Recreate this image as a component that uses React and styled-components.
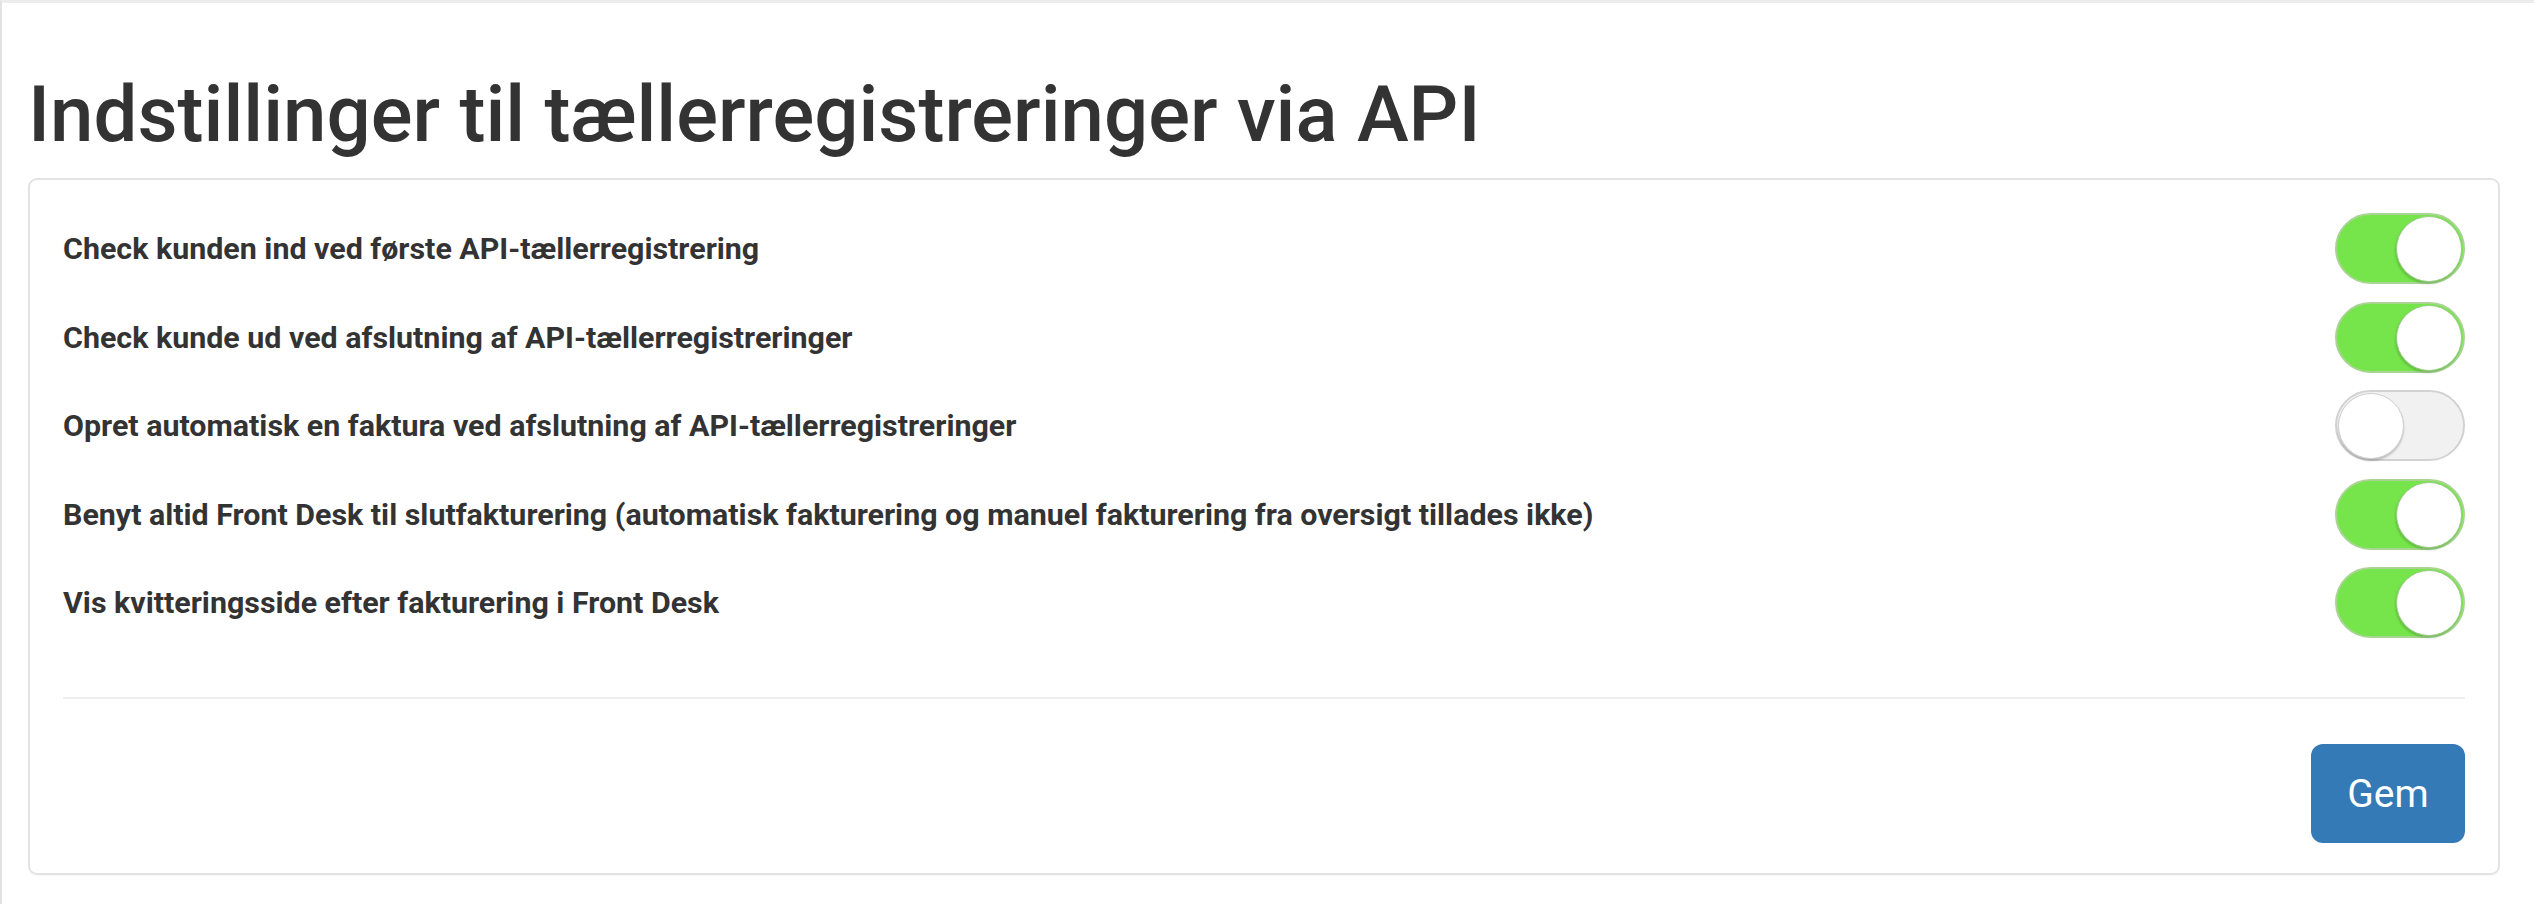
import React, { useState } from 'react'
import styled, { createGlobalStyle } from 'styled-components'

const GlobalStyle = createGlobalStyle`
  html, body {
    margin: 0;
    padding: 0;
    background: #fff;
  }
  body {
    font-family: Roboto, "Liberation Sans", sans-serif;
    color: #333;
  }
`

const Page = styled.div`
  box-sizing: border-box;
  width: 2534px;
  height: 904px;
  border-top: 3px solid #ececec;
  border-left: 2px solid #e2e2e2;
  padding: 0 34px 0 26px;
`

const Title = styled.h1`
  margin: 68px 0 19px;
  font-size: 78px;
  font-weight: 500;
  line-height: 88px;
  color: #333;
`

const Card = styled.div`
  box-sizing: border-box;
  border: 2px solid #e3e3e3;
  border-radius: 9px;
  padding: 33px 33px 30px 33px;
  box-shadow: 0 1px 2px rgba(0, 0, 0, 0.04);
`

const List = styled.div`
  display: flex;
  flex-direction: column;
  gap: 17.5px;
`

const Row = styled.div`
  display: flex;
  align-items: center;
  justify-content: space-between;
  min-height: 71px;
`

const Label = styled.label`
  font-size: 30.4px;
  font-weight: 700;
  color: #333;
`

const Track = styled.button`
  position: relative;
  box-sizing: border-box;
  width: 130px;
  height: 71px;
  padding: 0;
  border-radius: 36px;
  border: 2px solid ${p => (p.$on ? '#a9d494' : '#d2d2d2')};
  background: ${p => (p.$on ? '#76e54b' : '#f1f1f1')};
  cursor: pointer;
  flex-shrink: 0;
`

const Knob = styled.span`
  position: absolute;
  top: 1px;
  left: ${p => (p.$on ? '59px' : '1px')};
  box-sizing: border-box;
  width: 66px;
  height: 66px;
  border-radius: 50%;
  background: #fff;
  border: 1px solid ${p => (p.$on ? '#9ccd86' : '#cfcfcf')};
  box-shadow: ${p => (p.$on ? '-1px 2px 2px rgba(70, 130, 50, 0.35)' : '0 2px 2px rgba(0, 0, 0, 0.2)')};
`

const Divider = styled.hr`
  margin: 59px 0 45px;
  border: 0;
  border-top: 2px solid #eee;
`

const Footer = styled.div`
  display: flex;
  justify-content: flex-end;
`

const SaveButton = styled.button`
  width: 154px;
  height: 99px;
  border: 0;
  border-radius: 12px;
  background: #337ab7;
  color: #fff;
  font-family: Roboto, "Liberation Sans", sans-serif;
  font-size: 39px;
  font-weight: 400;
  cursor: pointer;
`

const settings = [
  { label: 'Check kunden ind ved første API-tællerregistrering', on: true },
  { label: 'Check kunde ud ved afslutning af API-tællerregistreringer', on: true },
  { label: 'Opret automatisk en faktura ved afslutning af API-tællerregistreringer', on: false },
  {
    label:
      'Benyt altid Front Desk til slutfakturering (automatisk fakturering og manuel fakturering fra oversigt tillades ikke)',
    on: true,
  },
  { label: 'Vis kvitteringsside efter fakturering i Front Desk', on: true },
]

const Toggle = ({ on, onClick }) => (
  <Track $on={on} onClick={onClick} type="button">
    <Knob $on={on} />
  </Track>
)

export default function App() {
  const [values, setValues] = useState(settings.map(s => s.on))

  const flip = i => {
    setValues(v => v.map((x, j) => (j === i ? !x : x)))
  }

  return (
    <>
      <GlobalStyle />
      <Page>
        <Title>Indstillinger til tællerregistreringer via API</Title>
        <Card>
          <List>
            {settings.map((s, i) => (
              <Row key={i}>
                <Label>{s.label}</Label>
                <Toggle on={values[i]} onClick={() => flip(i)} />
              </Row>
            ))}
          </List>
          <Divider />
          <Footer>
            <SaveButton>Gem</SaveButton>
          </Footer>
        </Card>
      </Page>
    </>
  )
}
